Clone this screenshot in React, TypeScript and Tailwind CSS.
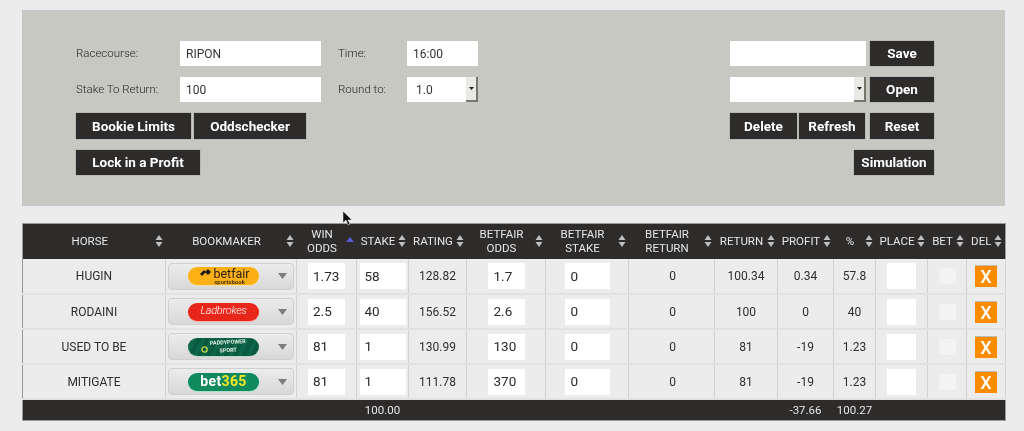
import React from 'react';

interface Runner {
  horse: string;
  bookie: string;
  odds: string;
  stake: string;
  rating: string;
  betfairOdds: string;
  returned: string;
  profit: string;
  percent: string;
}

const runners: Runner[] = [
  { horse: 'HUGIN', bookie: 'betfair', odds: '1.73', stake: '58', rating: '128.82', betfairOdds: '1.7', returned: '100.34', profit: '0.34', percent: '57.8' },
  { horse: 'RODAINI', bookie: 'ladbrokes', odds: '2.5', stake: '40', rating: '156.52', betfairOdds: '2.6', returned: '100', profit: '0', percent: '40' },
  { horse: 'USED TO BE', bookie: 'paddy', odds: '81', stake: '1', rating: '130.99', betfairOdds: '130', returned: '81', profit: '-19', percent: '1.23' },
  { horse: 'MITIGATE', bookie: 'bet365', odds: '81', stake: '1', rating: '111.78', betfairOdds: '370', returned: '81', profit: '-19', percent: '1.23' },
];

const SortIcon = ({ activeUp = false }: { activeUp?: boolean }) =>
  activeUp ? (
    <svg width="8" height="14" viewBox="0 0 8 14" className="shrink-0">
      <path d="M4 3 8 8H0z" fill="#5b5bd6" />
    </svg>
  ) : (
    <svg width="8" height="14" viewBox="0 0 8 14" className="shrink-0">
      <path d="M4 1 7.5 6H.5zM4 13 .5 8h7z" fill="#c0c0c0" />
    </svg>
  );

const SelectArrow = () => (
  <div className="flex h-full w-[12px] items-center justify-center border-r-2 border-b-2 border-[#77776f] bg-[#e9e9e6]">
    <svg width="5" height="3" viewBox="0 0 5 3">
      <path d="M0 0h5L2.5 3z" fill="#222" />
    </svg>
  </div>
);

const PanelButton = ({ label, className }: { label: string; className: string }) => (
  <div className={`flex items-center justify-center bg-[#2e2b2b] text-[13.5px] font-bold text-white shadow-[0_0_1px_#666] ${className}`}>
    {label}
  </div>
);

const TextBox = ({ value, className }: { value?: string; className: string }) => (
  <div className={`flex h-[25px] items-center bg-white pl-[6px] text-[12px] text-[#333] ${className}`}>{value}</div>
);

const FormLabel = ({ text, className }: { text: string; className: string }) => (
  <div className={`text-[11.5px] font-light text-[#1f1f1f] ${className}`}>{text}</div>
);

const BookieLogo = ({ name }: { name: string }) => {
  if (name === 'betfair') {
    return (
      <div className="flex h-[18px] w-[71px] flex-col items-center justify-center rounded-full bg-[#fbb016] pl-[3px] leading-none text-[#2b2118] shadow-[0_1px_1px_#f5e3a8]">
        <div className="flex items-center gap-[2px] text-[12.5px] leading-[11px]">
          <svg width="11" height="8" viewBox="0 0 11 8">
            <path d="M0 5 4 1l2 2-4 4zM5 3l3-3 3 3-3 3z" fill="#1c1c1c" />
          </svg>
          betfair
        </div>
        <div className="pl-[9px] text-[6px] leading-[6px] font-medium">sportsbook</div>
      </div>
    );
  }
  if (name === 'ladbrokes') {
    return (
      <div className="flex h-[18px] w-[71px] items-center justify-center rounded-full bg-[#e8261a] text-[11px] font-light tracking-tight text-white italic shadow-[0_1px_1px_#f0b0a8]">
        Ladbrokes
      </div>
    );
  }
  if (name === 'paddy') {
    return (
      <div className="flex h-[18px] w-[71px] items-center justify-center gap-[2px] rounded-full bg-[repeating-linear-gradient(115deg,#0a5a41_0px,#0a5a41_4px,#0d6649_4px,#0d6649_8px)] shadow-[0_1px_1px_#b8d8c8]">
        <svg width="7" height="7" viewBox="0 0 7 7" className="mt-[5px]">
          <circle cx="3.5" cy="3.5" r="2.6" fill="none" stroke="#c6d84a" strokeWidth="1.4" />
        </svg>
        <div className="-rotate-3 text-[5.5px] leading-[7.5px] font-bold text-[#dfeee0]">
          <div>PADDYPOWER</div>
          <div>SPORT</div>
        </div>
      </div>
    );
  }
  return (
    <div className="flex h-[18px] w-[71px] items-center justify-center rounded-full bg-[#0e8a5e] text-[14px] font-bold tracking-wide text-white shadow-[0_1px_1px_#a8e0c8]">
      bet<span className="text-[#f5e626]">365</span>
    </div>
  );
};

const BookieSelect = ({ name }: { name: string }) => (
  <div className="mx-auto flex h-[27px] w-[126px] items-center rounded-[4px] border border-[#cfcfcf] bg-gradient-to-b from-[#ececec] to-[#d8d8d8] pl-[19px]">
    <BookieLogo name={name} />
    <svg width="9" height="6" viewBox="0 0 9 6" className="ml-[19px]">
      <path d="M0 0h9L4.5 6z" fill="#7c7c7c" />
    </svg>
  </div>
);

const CellInput = ({ value, className }: { value?: string; className: string }) => (
  <div className={`mx-auto flex h-[26px] items-center bg-white pl-[5px] text-[13.5px] text-[#2a2a2a] ${className}`}>{value}</div>
);

const headers = [
  { lines: ['HORSE'], width: 'w-[143px]' },
  { lines: ['BOOKMAKER'], width: 'w-[131px]' },
  { lines: ['WIN', 'ODDS'], width: 'w-[60px]', active: true },
  { lines: ['STAKE'], width: 'w-[52px]' },
  { lines: ['RATING'], width: 'w-[58px]' },
  { lines: ['BETFAIR', 'ODDS'], width: 'w-[79px]' },
  { lines: ['BETFAIR', 'STAKE'], width: 'w-[83px]' },
  { lines: ['BETFAIR', 'RETURN'], width: 'w-[86px]' },
  { lines: ['RETURN'], width: 'w-[63px]' },
  { lines: ['PROFIT'], width: 'w-[56px]' },
  { lines: ['%'], width: 'w-[42px]' },
  { lines: ['PLACE'], width: 'w-[52px]' },
  { lines: ['BET'], width: 'w-[39px]' },
  { lines: ['DEL'], width: 'w-[39px]' },
];

const cell = 'border-r border-b-2 border-r-[#d2d2d2] border-b-[#e2e2e2] px-0 pt-[1px] pb-0 text-center text-[12px] text-[#2e2e2e]';

export default function App() {
  return (
    <div className="relative h-[431px] w-[1024px] overflow-hidden bg-[#ececec] pt-[10px] pr-[19px] pl-[22px] font-['Roboto',sans-serif] blur-[0.35px]">
      <div className="flex h-[196px] justify-between bg-[#c8c8c3] pt-[31px] pr-[71px] pl-[54px]">
        <div className="flex flex-col gap-[11px]">
          <div className="flex items-center">
            <FormLabel text="Racecourse:" className="w-[104px]" />
            <TextBox value="RIPON" className="w-[141px]" />
            <FormLabel text="Time:" className="w-[69px] pl-[17px] box-content" />
            <TextBox value="16:00" className="w-[71px]" />
          </div>
          <div className="flex items-center">
            <FormLabel text="Stake To Return:" className="w-[104px]" />
            <TextBox value="100" className="w-[141px]" />
            <FormLabel text="Round to:" className="w-[69px] pl-[17px] box-content" />
            <div className="flex h-[25px] w-[71px] items-center bg-white text-[12px] text-[#333]">
              <span className="flex-1 pl-[9px]">1.0</span>
              <SelectArrow />
            </div>
          </div>
          <div className="flex gap-[3px]">
            <PanelButton label="Bookie Limits" className="h-[26px] w-[115px]" />
            <PanelButton label="Oddschecker" className="h-[26px] w-[112px]" />
          </div>
          <PanelButton label="Lock in a Profit" className="h-[25px] w-[124px]" />
        </div>

        <div className="flex w-[204px] flex-col items-end gap-[11px]">
          <div className="flex gap-[4px]">
            <TextBox className="w-[136px]" />
            <PanelButton label="Save" className="h-[25px] w-[64px]" />
          </div>
          <div className="flex gap-[4px]">
            <div className="flex h-[25px] w-[136px] justify-end bg-white">
              <SelectArrow />
            </div>
            <PanelButton label="Open" className="h-[25px] w-[64px]" />
          </div>
          <div className="flex">
            <PanelButton label="Delete" className="h-[26px] w-[67px]" />
            <PanelButton label="Refresh" className="ml-[2px] h-[26px] w-[66px]" />
            <PanelButton label="Reset" className="ml-[5px] h-[26px] w-[64px]" />
          </div>
          <PanelButton label="Simulation" className="h-[25px] w-[80px]" />
        </div>
      </div>

      <table className="mt-[17px] w-[983px] table-fixed border-collapse border border-[#9a9a9a]">
        <thead>
          <tr className="h-[35px] bg-[#2e2b2b]">
            {headers.map((h) => (
              <th key={h.lines.join(' ')} className={`${h.width} p-0 text-[11.5px] leading-[14px] font-normal text-[#e6e6e6]`}>
                <div className="flex items-center pr-[3px] pl-[2px]">
                  <div className="flex-1 text-center">
                    {h.lines.map((line) => (
                      <div key={line}>{line}</div>
                    ))}
                  </div>
                  <SortIcon activeUp={h.active} />
                </div>
              </th>
            ))}
          </tr>
        </thead>
        <tbody>
          {runners.map((r) => (
            <tr key={r.horse} className="h-[35px] bg-[#ececec]">
              <td className={cell}>{r.horse}</td>
              <td className={cell}><BookieSelect name={r.bookie} /></td>
              <td className={cell}><CellInput value={r.odds} className="w-[37px]" /></td>
              <td className={cell}><CellInput value={r.stake} className="w-[46px]" /></td>
              <td className={cell}>{r.rating}</td>
              <td className={cell}><CellInput value={r.betfairOdds} className="w-[37px] pl-[6px]" /></td>
              <td className={cell}><CellInput value="0" className="w-[45px] pl-[6px]" /></td>
              <td className={`${cell} pl-[2px]`}>0</td>
              <td className={cell}>{r.returned}</td>
              <td className={cell}>{r.profit}</td>
              <td className={cell}>{r.percent}</td>
              <td className={cell}><CellInput className="w-[29px]" /></td>
              <td className={cell}>
                <div className="mx-auto h-[16px] w-[17px] rounded-[2px] bg-[#f3f3f3]" />
              </td>
              <td className={cell}>
                <div className="mx-auto flex h-[22px] w-[22px] items-center justify-center border-t border-[#bbb] bg-[#fb8c00] text-[18px] font-medium text-white">
                  X
                </div>
              </td>
            </tr>
          ))}
          <tr className="h-[22px] bg-[#2e2b2b] text-center text-[11.5px] text-[#e6e6e6]">
            <td colSpan={3} />
            <td className="px-0 pt-[1px] pb-0">100.00</td>
            <td colSpan={5} />
            <td className="px-0 pt-[1px] pb-0">-37.66</td>
            <td className="px-0 pt-[1px] pb-0">100.27</td>
            <td colSpan={3} />
          </tr>
        </tbody>
      </table>

      {/* mouse pointer caught in the capture */}
      <svg width="10" height="15" viewBox="0 0 10 15" className="absolute top-[211px] left-[343px]">
        <path d="M0 0v12l3-3 2 5 2-1-2-4h4z" fill="#111" stroke="#fff" strokeWidth="0.5" />
      </svg>
    </div>
  );
}
